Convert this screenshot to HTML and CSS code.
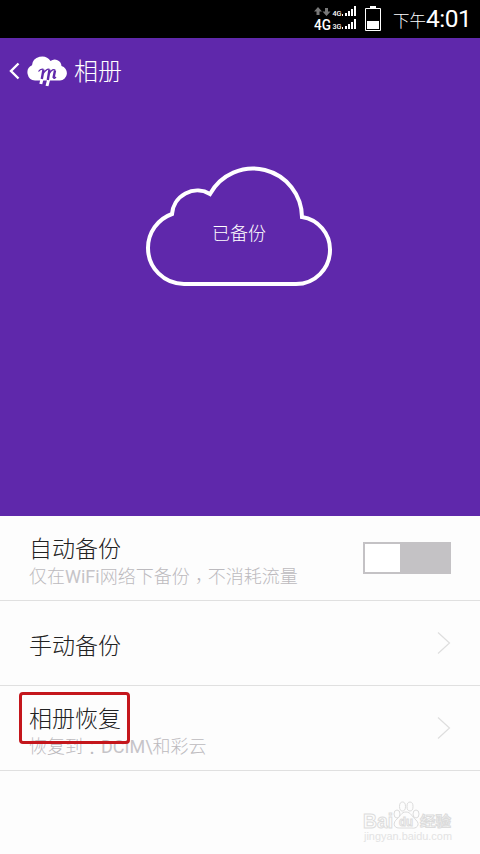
FILE: index.html
```html
<!DOCTYPE html>
<html lang="zh-CN">
<head>
<meta charset="utf-8">
<title>相册</title>
<link rel="stylesheet" href="styles.css">
</head>
<body>
<div class="statusbar">
  <svg class="signal" width="44" height="26" viewBox="0 0 44 26">
    <g fill="#777">
      <path d="M4 1l4 4.500H5.500V9h-3V5.500H0z"/>
      <path d="M12.500 10l-4-4.500H11V2h3v3.500h2.500z"/>
    </g>
    <text class="net-main" x="0" y="23.500" textLength="17" lengthAdjust="spacingAndGlyphs">4G</text>
    <text class="net-sub" x="18.500" y="10" textLength="9" lengthAdjust="spacingAndGlyphs">4G</text>
    <text class="net-sub" x="18.500" y="23" textLength="9" lengthAdjust="spacingAndGlyphs">3G</text>
    <g fill="#fff">
      <path d="M28 8h1v2h-1zM31 7h2v3h-2zM34 5h2v5h-2zM37 3h2v7h-2zM40 0h2v10h-2z"/>
      <path d="M28 21h1v2h-1zM31 20h2v3h-2zM34 18h2v5h-2zM37 16h2v7h-2zM40 13h2v10h-2z"/>
    </g>
  </svg>
  <svg class="battery" width="16" height="25" viewBox="0 0 16 25">
    <path d="M5 0h6v2H5zM2 15h12v8H2z" fill="#fff"/>
    <path d="M.5 2.500h15v22H.5z" fill="none" stroke="#fff"/>
  </svg>
  <div class="clock"><span class="period">下午</span><span class="time">4:01</span></div>
</div>

<div class="hero">
  <div class="header">
    <svg class="back" width="12" height="18" viewBox="0 0 12 18"><path d="M10.500 1.500L3 9 10.500 16.500" fill="none" stroke="#fff" stroke-width="2.400"/></svg>
    <svg class="logo" width="41" height="31" viewBox="0 0 41 31">
      <path d="M8 24.500A8 8 0 0 1 5 9.300A10 9.500 0 0 1 23.500 5A6.800 6.800 0 0 1 34.500 10A7.400 7.400 0 0 1 33 24.500z" fill="#fff"/>
      <path class="m-tail" d="M15 23L13.800 28M21.800 23L20 30"/>
      <path class="m-stem" d="M16.500 13.500L14.800 23M22.500 13.500L20.800 24M28 14.500L26.500 22"/>
      <path class="m-arch" d="M11.500 15.500Q13.500 12.500 16.500 13.300M16 18Q19.500 12.500 22.500 13.300M22 18Q26 11.500 28.300 14.500M26.500 21.500Q27 23.500 29 21"/>
    </svg>
    <h1>相册</h1>
  </div>
  <div class="cloud">
    <svg width="190" height="124" viewBox="144 164 190 124"><path d="M184 284A36 36 0 0 1 148 248A36 36 0 0 1 172 214A25.300 25.300 0 0 1 210 194A49 49 0 0 1 302 217A33 33 0 0 1 330 250A34 34 0 0 1 296 284Z" fill="none" stroke="#fff" stroke-width="4"/></svg>
    <span class="cloud-label">已备份</span>
  </div>
</div>

<div class="list">
  <div class="row">
    <div class="texts">
      <div class="title">自动备份</div>
      <div class="sub">仅在<span class="latin">WiFi</span>网络下备份<span class="punct comma" lang="zh-TW">，</span>不消耗流量</div>
    </div>
    <div class="switch"><div class="knob"></div></div>
  </div>
  <div class="row">
    <div class="texts single"><div class="title">手动备份</div></div>
    <svg class="chevron" width="14" height="24" viewBox="0 0 14 24"><path d="M1 1.500L12.500 12 1 22.500"/></svg>
  </div>
  <div class="row">
    <div class="texts">
      <div class="title">相册恢复</div>
      <div class="sub">恢复到<span class="punct" lang="zh-TW">：</span><span class="latin">DCIM\</span>和彩云</div>
    </div>
    <svg class="chevron" width="14" height="24" viewBox="0 0 14 24"><path d="M1 1.500L12.500 12 1 22.500"/></svg>
    <div class="marker"></div>
  </div>
</div>

<div class="footer">
  <svg width="92" height="50" viewBox="0 0 92 50">
    <g class="wm">
      <text class="wm-big" x="0" y="29" textLength="30" lengthAdjust="spacingAndGlyphs">Bai</text>
      <ellipse cx="34" cy="15" rx="3" ry="4"/>
      <ellipse cx="39.500" cy="7.500" rx="3" ry="4.500"/>
      <ellipse cx="47" cy="7.500" rx="3" ry="4.500"/>
      <ellipse cx="53" cy="15" rx="3" ry="4"/>
      <path d="M43 13C48 13 49 18 53 21C58 26 53 30 49 29H36C30 29 30 23 34 20C38 17 38 13 43 13Z"/>
      <text class="wm-du" x="36" y="27" textLength="14" lengthAdjust="spacingAndGlyphs">du</text>
      <text class="wm-cn" x="57" y="27" textLength="31" lengthAdjust="spacingAndGlyphs">经验</text>
    </g>
    <text class="wm-url" x="1" y="41" textLength="88" lengthAdjust="spacingAndGlyphs">jingyan.baidu.com</text>
  </svg>
</div>
</body>
</html>
```
FILE: styles.css
```css
* { box-sizing: border-box; }
body {
  margin: 0;
  width: 480px;
  height: 854px;
  overflow: hidden;
  background: #fdfdfd;
  font-family: Roboto, "Noto Sans CJK SC", sans-serif;
  font-weight: 300;
}
svg { display: block; flex: none; }
.statusbar {
  display: flex;
  align-items: flex-start;
  height: 38px;
  padding: 6px 10px 0 314px;
  background: #000;
  color: #fff;
}
.battery { margin-left: 7px; }
.net-main { font: 500 15px Roboto, sans-serif; fill: #fff; }
.net-sub { font: 500 7px Roboto, sans-serif; fill: #fff; }
.clock {
  display: flex;
  align-items: baseline;
  margin: -1px 0 0 12px;
  line-height: 28px;
  white-space: nowrap;
}
.period { font-size: 16.5px; }
.time { font-size: 24.5px; font-weight: 400; letter-spacing: -.5px; }

.hero { height: 478px; background: #5f28ab; color: #fff; }
.header { display: flex; align-items: center; height: 66px; padding-left: 8px; }
.back { margin-right: 7px; }
.logo { margin-right: 6px; }
.m-stem { fill: none; stroke: #5f28ab; stroke-width: 2.4; }
.m-arch { fill: none; stroke: #5f28ab; stroke-width: 1.3; }
.m-tail { fill: none; stroke: #fff; stroke-width: 3; }
h1 { margin: 0; padding-top: 2px; font-size: 24px; line-height: 36px; font-weight: 300; }
.cloud { display: grid; width: 190px; margin: 60px 0 0 144px; }
.cloud > * { grid-area: 1 / 1; }
.cloud-label { place-self: center; padding-top: 16px; font-size: 18px; line-height: 26px; }

.row {
  position: relative;
  display: flex;
  align-items: center;
  justify-content: space-between;
  height: 85px;
  padding: 0 29px;
  border-bottom: 1px solid #e0e0e0;
}
.texts { padding-top: 4px; }
.single { padding-top: 8px; }
.title { color: #222; font-size: 23px; line-height: 32px; }
.sub { height: 21px; color: #bcbabe; font-size: 18px; line-height: 21px; white-space: nowrap; }
.latin { font-weight: 400; color: #c6c4c8; }
.punct { font-family: "Noto Sans CJK TC", sans-serif; line-height: 0; vertical-align: -2px; }
.comma { vertical-align: -5px; }
.switch { width: 88px; height: 32px; padding: 2px; background: #c4c2c5; }
.knob { width: 35px; height: 28px; background: #fff; }
.chevron path { fill: none; stroke: #dedede; stroke-width: 1.2; }
.marker {
  position: absolute;
  left: 19px;
  top: 6px;
  width: 111px;
  height: 52px;
  border: 3px solid #c4161c;
  border-radius: 4px;
}
.footer { padding: 28px 0 0 363px; }
.wm { fill: #fdfdfd; stroke: #dcdcdc; stroke-width: 1; }
.wm-big { font: 700 20px "Liberation Sans", sans-serif; }
.wm-du { font: 700 12px "Liberation Sans", sans-serif; }
.wm-cn { font: 700 14px "Noto Sans CJK SC", sans-serif; }
.wm-url { font: 400 10px "Liberation Sans", sans-serif; fill: #e3e3e3; }
```
